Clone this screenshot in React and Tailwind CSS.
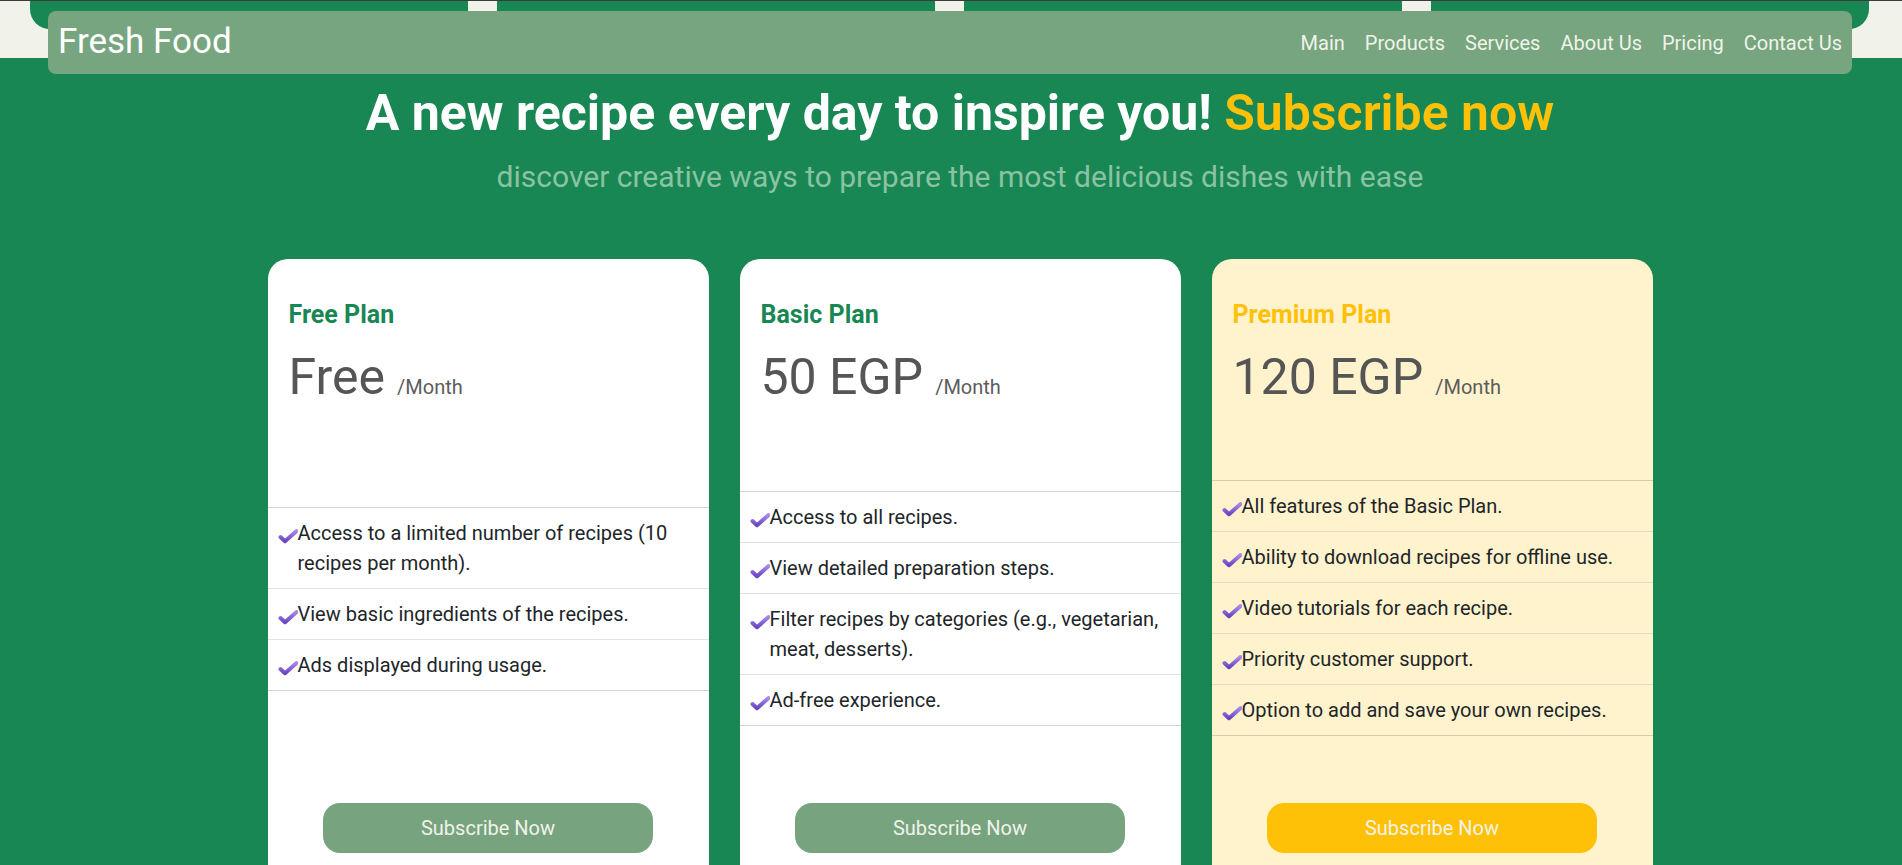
import React from 'react';

const plans = [
  {
    name: 'Free Plan',
    price: 'Free',
    headH: 'h-[248px]',
    premium: false,
    features: [
      'Access to a limited number of recipes (10 recipes per month).',
      'View basic ingredients of the recipes.',
      'Ads displayed during usage.',
    ],
  },
  {
    name: 'Basic Plan',
    price: '50 EGP',
    headH: 'h-[232px]',
    premium: false,
    features: [
      'Access to all recipes.',
      'View detailed preparation steps.',
      'Filter recipes by categories (e.g., vegetarian, meat, desserts).',
      'Ad-free experience.',
    ],
  },
  {
    name: 'Premium Plan',
    price: '120 EGP',
    headH: 'h-[221px]',
    premium: true,
    features: [
      'All features of the Basic Plan.',
      'Ability to download recipes for offline use.',
      'Video tutorials for each recipe.',
      'Priority customer support.',
      'Option to add and save your own recipes.',
    ],
  },
];

const links = ['Main', 'Products', 'Services', 'About Us', 'Pricing', 'Contact Us'];

const Check = ({ id }) => (
  <svg width="20" height="16" viewBox="0 0 20 16" className="flex-shrink-0 mt-[10px]">
    <defs>
      <linearGradient id={id} x1="0" y1="0" x2="0" y2="1">
        <stop offset="0" stopColor="#a78bea" />
        <stop offset="1" stopColor="#6a45c2" />
      </linearGradient>
    </defs>
    <path d="M2.5 9 L7 13.2 L18.5 3" fill="none" stroke={`url(#${id})`} strokeWidth="4" strokeLinecap="round" strokeLinejoin="round" />
  </svg>
);

const PlanCard = ({ plan, idx }) => {
  const line = plan.premium ? 'border-[#e2dcc4]' : 'border-[#e1e3e6]';
  const edge = plan.premium ? 'border-[#d8cca0]' : 'border-[#d4d6d9]';
  return (
    <div className={`w-[441px] h-[640px] rounded-[20px] flex flex-col ${plan.premium ? 'bg-[#fff3cd]' : 'bg-white'}`}>
      <div className={`${plan.headH} px-[21px] pt-[41px]`}>
        <h3 className={`text-[25px] leading-[1.2] font-bold ${plan.premium ? 'text-[#ffc107]' : 'text-[#198754]'}`}>
          {plan.name}
        </h3>
        <div className="mt-[17px] flex items-baseline text-[#555555]">
          <span className="text-[50px] leading-[1.2]">{plan.price}</span>
          <span className="ml-[12px] text-[20px] text-[#5c5c5c]">/Month</span>
        </div>
      </div>
      <ul className={`border-t ${edge}`}>
        {plan.features.map((f, i) => (
          <li
            key={i}
            className={`flex pl-[10px] pr-[16px] py-[10px] text-[20px] leading-[30px] text-[#212529] border-b ${
              i === plan.features.length - 1 ? edge : line
            }`}
          >
            <Check id={`chk-${idx}-${i}`} />
            <span>{f}</span>
          </li>
        ))}
      </ul>
      <div className="flex-1" />
      <div className="flex justify-center pb-[46px]">
        <button
          className={`w-[330px] h-[50px] rounded-[17px] text-[20px] text-[#f1f3ea] ${
            plan.premium ? 'bg-[#ffc107]' : 'bg-[#77a37e]'
          }`}
        >
          Subscribe Now
        </button>
      </div>
    </div>
  );
};

export default function App() {
  return (
    <div className="min-h-screen bg-[#198754] font-['Roboto','Liberation_Sans',sans-serif]">
      <div className="h-px bg-[#3b3b3b]" />
      <div className="relative h-[57px] bg-[#f1f3ea]">
        <div className="flex gap-[29px] pl-[30px] pr-[33px]">
          <div className="flex-1 h-[28px] bg-[#198754] rounded-bl-[20px]" />
          <div className="flex-1 h-[28px] bg-[#198754]" />
          <div className="flex-1 h-[28px] bg-[#198754]" />
          <div className="flex-1 h-[28px] bg-[#198754] rounded-br-[20px]" />
        </div>
        <nav className="absolute left-[48px] right-[50px] top-[10px] h-[63px] rounded-[8px] bg-[#77a57f] flex items-center justify-between pl-[10px]">
          <a className="text-[35px] text-white">Fresh Food</a>
          <ul className="flex">
            {links.map((l) => (
              <li key={l} className="px-[10px] text-[20px] text-[#f1f3ea]">
                {l}
              </li>
            ))}
          </ul>
        </nav>
      </div>

      <main className="pl-[18px]">
        <section className="pt-[25px] text-center">
          <h1 className="text-[50px] leading-[1.2] font-bold text-white">
            A new recipe every day to inspire you! <span className="text-[#ffc107] font-semibold">Subscribe now</span>
          </h1>
          <p className="mt-[16px] text-[30px] leading-[1.2] text-[#8ac3a3]">
            discover creative ways to prepare the most delicious dishes with ease
          </p>
        </section>

        <div className="mt-[64px] flex justify-center gap-[31px]">
          {plans.map((p, i) => (
            <PlanCard key={p.name} plan={p} idx={i} />
          ))}
        </div>
      </main>
    </div>
  );
}
